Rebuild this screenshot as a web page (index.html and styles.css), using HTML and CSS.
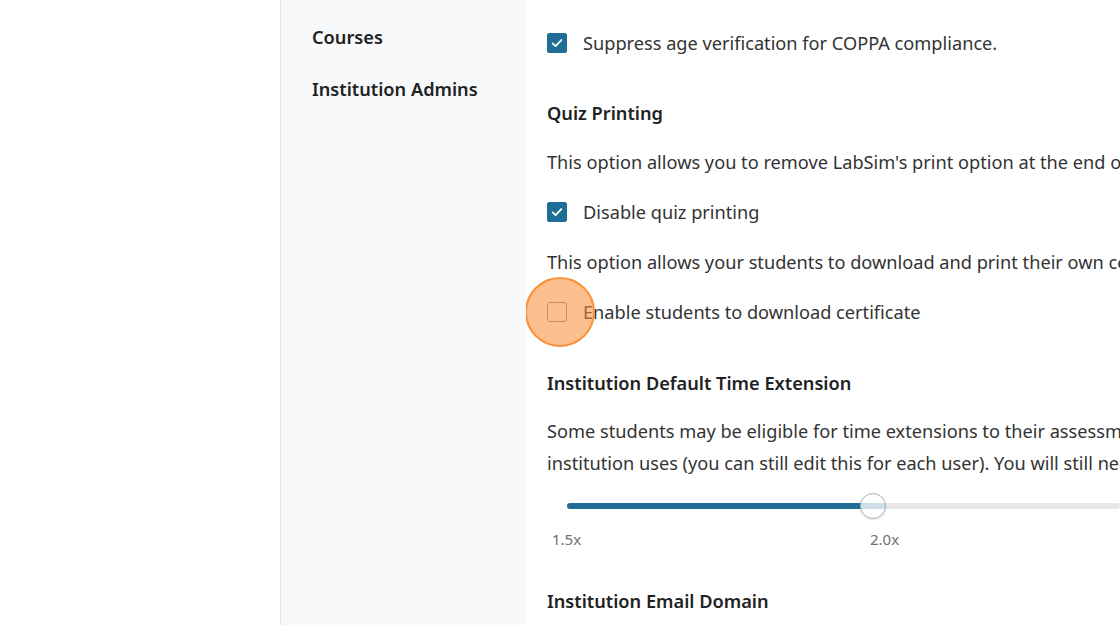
FILE: index.html
```html
<!DOCTYPE html>
<html lang="en">
<head>
  <meta charset="UTF-8" />
  <meta name="viewport" content="width=device-width, initial-scale=1.0" />
  <title>Institution Settings</title>
  <link rel="stylesheet" href="styles.css">
</head>
<body>
  <div class="page">
    <div class="gutter"></div>

    <nav class="sidebar">
      <a href="#" class="side-link">Courses</a>
      <a href="#" class="side-link">Institution Admins</a>
    </nav>

    <main class="main">
      <label class="check-row">
        <span class="box checked"><svg viewBox="0 0 20 20"><path d="M5.2 10.4l3.2 3.1 6.4-6.8"/></svg></span>
        <span>Suppress age verification for COPPA compliance.</span>
      </label>

      <h3 class="section-title">Quiz Printing</h3>
      <p class="desc">This option allows you to remove LabSim's print option at the end of a quiz.</p>
      <label class="check-row">
        <span class="box checked"><svg viewBox="0 0 20 20"><path d="M5.2 10.4l3.2 3.1 6.4-6.8"/></svg></span>
        <span>Disable quiz printing</span>
      </label>

      <p class="desc">This option allows your students to download and print their own certificates.</p>
      <label class="check-row">
        <span class="box"></span>
        <span>Enable students to download certificate</span>
        <span class="click-ring"></span>
      </label>

      <h3 class="section-title second">Institution Default Time Extension</h3>
      <p class="desc wrap">Some students may be eligible for time extensions to their assessments.<br>institution uses (you can still edit this for each user). You will still need to enable it.</p>

      <div class="slider">
        <div class="track">
          <div class="fill" style="width:319px"></div>
          <div class="thumb" style="left:293px"></div>
        </div>
      </div>
      <div class="ticks">
        <span>1.5x</span>
        <span>2.0x</span>
      </div>

      <h3 class="section-title email">Institution Email Domain</h3>
    </main>
  </div>
</body>
</html>
```

FILE: styles.css
```css
*{margin:0;padding:0;box-sizing:border-box;}
html,body{width:100%;height:100%;overflow:hidden;background:#fff;}
body{font-family:'Noto Sans','Open Sans',sans-serif;color:#333;font-size:18.2px;}
a{color:inherit;text-decoration:none;}

.page{display:grid;grid-template-columns:280px 246px 1fr;height:100vh;}

.sidebar{background:#f8f9fb;border-left:1px solid #e2e4e8;padding:21px 0 0 31px;display:flex;flex-direction:column;gap:20px;}
.side-link{font-weight:600;color:#222;line-height:32px;white-space:nowrap;}

.main{display:flex;flex-direction:column;align-items:flex-start;padding:27px 0 0 21px;white-space:nowrap;overflow:hidden;}
.main > *{flex-shrink:0;}

.check-row{position:relative;display:flex;align-items:center;gap:16px;height:32px;margin-bottom:18px;}
.box{width:20px;height:20px;border:1.5px solid #8a8a8a;border-radius:3px;background:#fff;display:flex;align-items:center;justify-content:center;flex-shrink:0;}
.box.checked{background:#1f6e96;border-color:#1f6e96;border-radius:2px;}
.box svg{width:20px;height:20px;fill:none;stroke:#fff;stroke-width:2;stroke-linecap:round;stroke-linejoin:round;}

/* click highlight sitting over the checkbox */
.click-ring{position:absolute;left:-22px;top:-19px;width:70px;height:70px;border-radius:50%;background:rgba(250,140,50,0.55);border:2.5px solid #f7923a;}

.section-title{font-size:18.2px;font-weight:600;color:#222;line-height:32px;margin:20px 0 17px;}
.section-title.second{margin-top:21px;}
.desc{line-height:32px;margin-bottom:18px;}
.desc.wrap{margin-bottom:0;margin-top:-1px;}

.slider{align-self:stretch;padding:14px 0 0 20px;}
.track{position:relative;height:6px;margin:10px 0;background:#e8e8e8;border-radius:3px;}
.fill{height:100%;background:#1f6e96;border-radius:3px;}
.thumb{position:absolute;top:-10px;width:26px;height:26px;border-radius:50%;border:1px solid #aab0b5;background:rgba(255,255,255,0.78);box-shadow:0 1px 2px rgba(0,0,0,0.12);}

.ticks{display:flex;padding:10px 0 0 5px;font-size:15px;line-height:20px;color:#707070;}
.ticks span{width:318px;flex-shrink:0;}

.section-title.email{margin-top:36px;}
```
